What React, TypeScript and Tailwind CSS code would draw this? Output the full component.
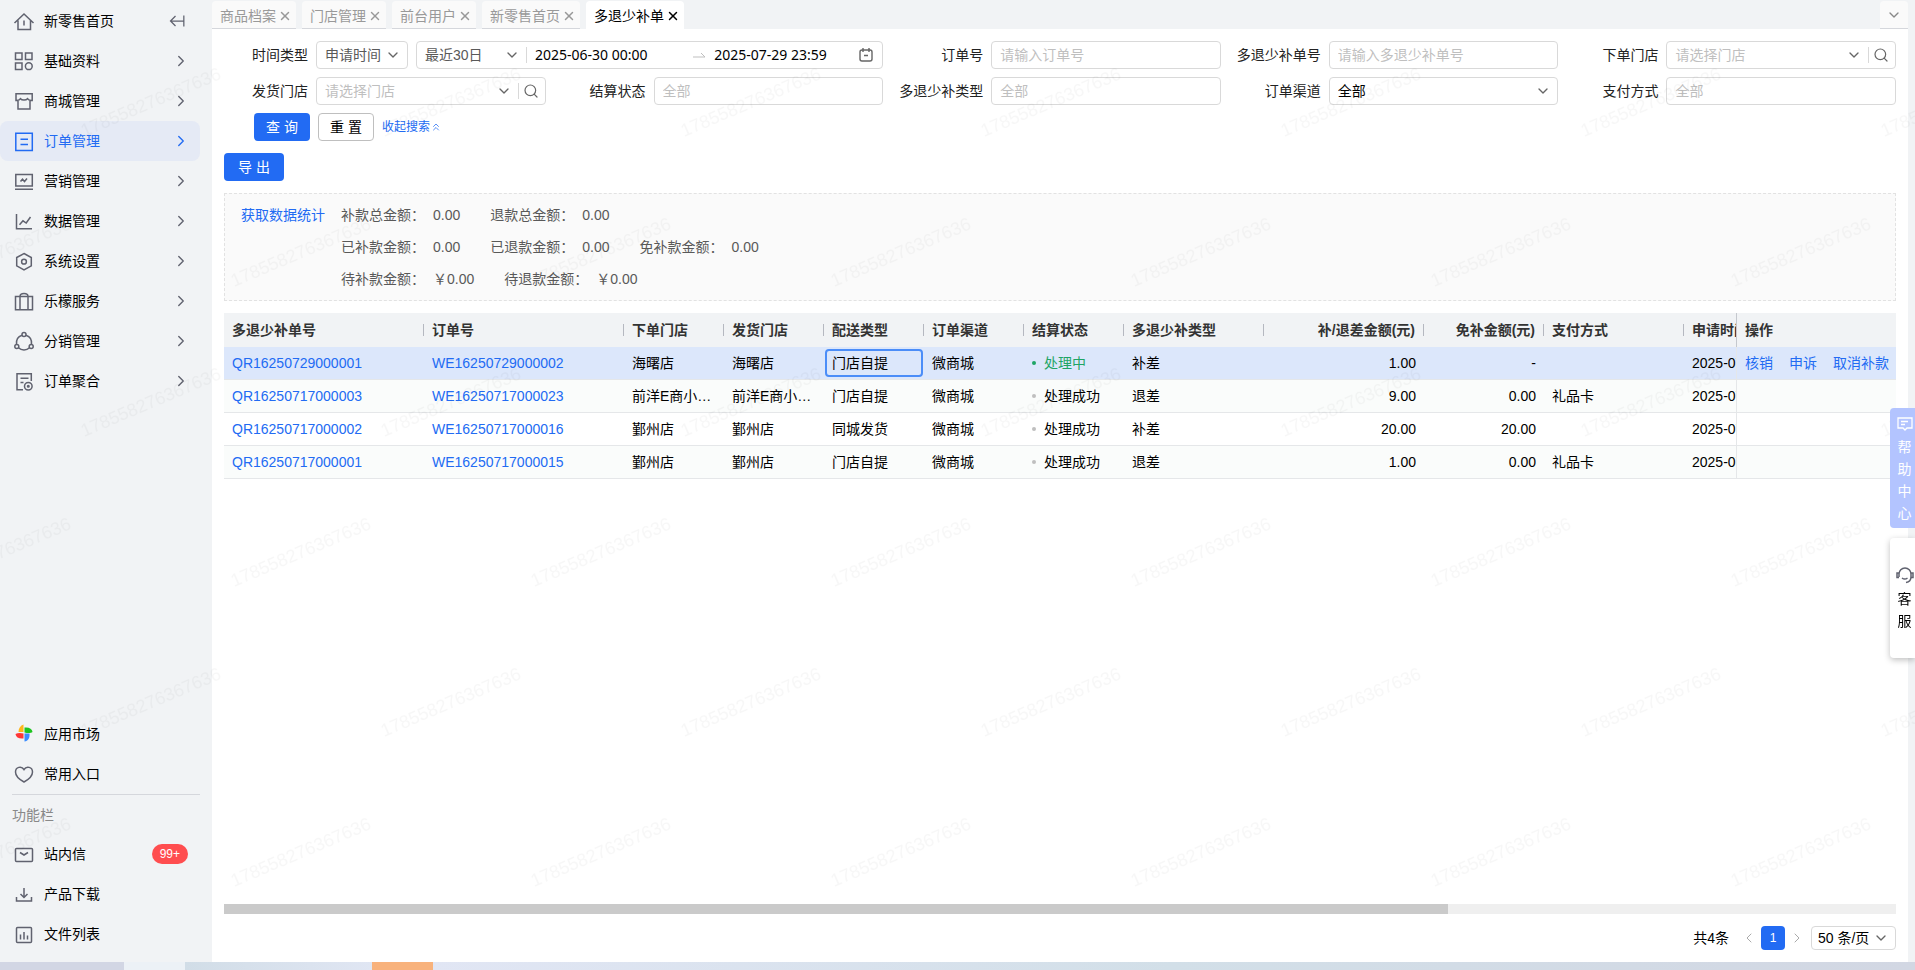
import type { ReactNode } from "react";
import { ChevronDown, ChevronLeft, ChevronRight, ChevronsUp, Search, X } from "lucide-react";

const Icon = ({ children, className = "size-6 text-[#60626f]" }: { children: ReactNode; className?: string }) => (
  <svg
    viewBox="0 0 24 24"
    fill="none"
    stroke="currentColor"
    strokeWidth="1.5"
    className={`shrink-0 ${className}`}
    aria-hidden="true"
  >
    {children}
  </svg>
);

const icons = {
  home: (
    <Icon>
      <path d="M2.5 14 12 5l9.500 9M6 11.500V20.500h12.500V11.500M12 11.500v5" />
    </Icon>
  ),
  basic: (
    <Icon>
      <path d="M3.500 4h6.500v6.500H3.500zM13.500 4H20v6.500h-6.500zM3.500 14h6.500v6.500H3.500z" />
      <circle cx="16.800" cy="17.200" r="3.400" />
    </Icon>
  ),
  mall: (
    <Icon>
      <path d="M4 4.800h16.200v6.700h-2.200V20H6v-8.500H4zM4 11.500c2 0 3.500-.5 4.500-1.800 1.500 1.800 5.500 1.800 7 0 1 1.300 2.500 1.800 4.500 1.800" />
    </Icon>
  ),
  order: (
    <Icon className="size-6 text-[#226bf3]">
      <path d="M3.800 4.200h16.500v17.300H3.800zM8.500 10.200h7.500M8.500 15.500h7.500" />
    </Icon>
  ),
  marketing: (
    <Icon>
      <path d="M3.800 5.500h16.500v11.500H3.800zM3 20.200h18M8.500 12.500l2-2.300 2 2.300 2.500-3" />
    </Icon>
  ),
  data: (
    <Icon>
      <path d="M4.500 5v14.800H20M7.500 15.800l3.500-4 3.200 2.200 4.300-6" />
    </Icon>
  ),
  settings: (
    <Icon>
      <path d="m12 4.500 7.300 4v8.300L12 21l-7.300-4.200V8.500z" />
      <circle cx="12" cy="12.700" r="2.400" />
    </Icon>
  ),
  service: (
    <Icon>
      <path d="M3.500 7.500h17v13.300h-17zM8 20.800V7.500c0-4 8-4 8 0v13.300" />
    </Icon>
  ),
  share: (
    <Icon>
      <circle cx="12" cy="5.500" r="2" />
      <circle cx="4.800" cy="17.500" r="2" />
      <circle cx="19.200" cy="17.500" r="2" />
      <path d="M10 6.200c-4 1.300-6 5-5.500 9.300M14 6.200c4 1.300 6 5 5.500 9.300M6.500 18.800c3 3 8 3 11 0" />
    </Icon>
  ),
  gather: (
    <Icon>
      <path d="M19.300 12V4.800H5v16h6M8.500 9.200h8M8.500 13.500h3" />
      <circle cx="16.300" cy="17.200" r="3.800" />
      <circle cx="16.300" cy="17.200" r=".8" />
    </Icon>
  ),
  heart: (
    <Icon>
      <path d="M12 20C6.500 17 3.500 13.500 3.500 10c0-5 6-6.500 8.500-2.500 2.500-4 8.500-2.500 8.500 2.500 0 3.500-3 7-8.500 10z" />
    </Icon>
  ),
  mail: (
    <Icon>
      <rect x="3.500" y="6.500" width="17" height="13" rx="1" />
      <path d="m8 10.500 4 2.500 4-2.500" />
    </Icon>
  ),
  download: (
    <Icon>
      <path d="M12 6v9M8.500 12l3.500 3.500 3.500-3.500M4.500 15v4h15v-4" />
    </Icon>
  ),
  files: (
    <Icon>
      <rect x="4.500" y="5.500" width="15" height="15" rx="1" />
      <path d="M8.500 17.500v-5M12 17.500V10M15.500 17.500v-4" />
    </Icon>
  ),
  market: (
    <svg viewBox="0 0 24 24" className="size-6 shrink-0" aria-hidden="true">
      <path d="M6.500 10C6.500 6 8.500 3.500 11.500 2.500V10z" fill="#ffb61a" />
      <path d="M12.500 5.500c4.500-.5 7.500 1 8 4.500-1.500 1-4 1.500-8 .5z" fill="#1dc41f" />
      <path d="M17.500 11.500c.5 4.500-1.500 7.500-5 8V11.500z" fill="#3b8cff" />
      <path d="M11.500 16.500c-4.500.5-7.500-1-8-4.500 2-1 4.500-1.500 8-.5z" fill="#ff3636" />
    </svg>
  ),
};

type IconName = keyof typeof icons;

const menu: { icon: IconName; label: string; active?: boolean }[] = [
  { icon: "basic", label: "基础资料" },
  { icon: "mall", label: "商城管理" },
  { icon: "order", label: "订单管理", active: true },
  { icon: "marketing", label: "营销管理" },
  { icon: "data", label: "数据管理" },
  { icon: "settings", label: "系统设置" },
  { icon: "service", label: "乐檬服务" },
  { icon: "share", label: "分销管理" },
  { icon: "gather", label: "订单聚合" },
];

const tabs = ["商品档案", "门店管理", "前台用户", "新零售首页", "多退少补单"];

const stats = [
  [
    ["补款总金额：", "0.00"],
    ["退款总金额：", "0.00"],
  ],
  [
    ["已补款金额：", "0.00"],
    ["已退款金额：", "0.00"],
    ["免补款金额：", "0.00"],
  ],
  [
    ["待补款金额：", "￥0.00"],
    ["待退款金额：", "￥0.00"],
  ],
];

const columns: { title: string; col: string; right?: boolean }[] = [
  { title: "多退少补单号", col: "w-[200px]" },
  { title: "订单号", col: "w-[200px]" },
  { title: "下单门店", col: "w-[100px]" },
  { title: "发货门店", col: "w-[100px]" },
  { title: "配送类型", col: "w-[100px]" },
  { title: "订单渠道", col: "w-[100px]" },
  { title: "结算状态", col: "w-[100px]" },
  { title: "多退少补类型", col: "w-[140px]" },
  { title: "补/退差金额(元)", col: "w-[160px]", right: true },
  { title: "免补金额(元)", col: "w-[120px]", right: true },
  { title: "支付方式", col: "w-[140px]" },
  { title: "申请时间", col: "w-[664px]" },
];

const rows = [
  { no: "QR16250729000001", order: "WE16250729000002", store: "海曙店", delivery: "门店自提", status: "处理中", type: "补差", amount: "1.00", free: "-", pay: "", time: "2025-07" },
  { no: "QR16250717000003", order: "WE16250717000023", store: "前洋E商小镇店", delivery: "门店自提", status: "处理成功", type: "退差", amount: "9.00", free: "0.00", pay: "礼品卡", time: "2025-07" },
  { no: "QR16250717000002", order: "WE16250717000016", store: "鄞州店", delivery: "同城发货", status: "处理成功", type: "补差", amount: "20.00", free: "20.00", pay: "", time: "2025-07" },
  { no: "QR16250717000001", order: "WE16250717000015", store: "鄞州店", delivery: "门店自提", status: "处理成功", type: "退差", amount: "1.00", free: "0.00", pay: "礼品卡", time: "2025-07" },
];

const box = "h-7 rounded border border-[#d9d9d9] bg-white";

const Field = ({ id, label, className = "", children }: { id: string; label: string; className?: string; children: ReactNode }) => (
  <div className={`flex items-center gap-2 ${className}`}>
    <label htmlFor={id} className="w-21 shrink-0 text-right whitespace-nowrap">
      {label}
    </label>
    {children}
  </div>
);

const TextField = ({ id, label, placeholder }: { id: string; label: string; placeholder: string }) => (
  <Field id={id} label={label}>
    <input id={id} placeholder={placeholder} className={`${box} w-full min-w-0 px-2 placeholder:text-[#bfbfbf]`} />
  </Field>
);

const Select = ({ id, label, options, className = "" }: { id: string; label?: string; options: string[]; className?: string }) => (
  <div className={`relative flex items-center ${className}`}>
    <select id={id} aria-label={label} className="h-full w-full appearance-none bg-transparent pr-6 pl-2 outline-none">
      {options.map((o) => (
        <option key={o}>{o}</option>
      ))}
    </select>
    <ChevronDown className="pointer-events-none absolute right-1.5 size-4 text-[#666]" />
  </div>
);

const StoreField = ({ id, label }: { id: string; label: string }) => (
  <Field id={id} label={label}>
    <div className={`${box} flex w-full min-w-0 items-center`}>
      <Select id={id} options={["请选择门店"]} className="h-full flex-1 text-[#bfbfbf]" />
      <span className="h-4 w-px bg-[#d9d9d9]" />
      <button type="button" aria-label="搜索门店" className="pr-1.5 pl-1">
        <Search className="size-4" color="#666" strokeWidth={1.8} />
      </button>
    </div>
  </Field>
);

const Sidebar = () => (
  <aside className="flex w-53 shrink-0 flex-col justify-between pt-px pb-2 text-black">
    <nav className="w-50">
      <div className="flex h-10 items-center gap-2 pr-3 pl-3">
        {icons.home}
        <a href="#home">新零售首页</a>
        <button type="button" aria-label="收起菜单" className="ml-auto">
          <Icon className="size-5 text-[#60626f]">
            <path d="M19 5.500v13M19 12H3M9 6l-6 6 6 6" />
          </Icon>
        </button>
      </div>
      {menu.map((m) => (
        <a
          key={m.label}
          href="#menu"
          className={`flex h-10 items-center gap-2 rounded-lg pr-2.5 pl-3 ${m.active ? "bg-[#e5eaf5] text-[#226bf3]" : ""}`}
        >
          {icons[m.icon]}
          {m.label}
          <ChevronRight className={`ml-auto size-4.5 ${m.active ? "" : "text-[#60626f]"}`} strokeWidth={1.8} />
        </a>
      ))}
    </nav>
    <nav className="w-50">
      <a href="#market" className="flex h-10 items-center gap-2 pl-3">
        {icons.market}应用市场
      </a>
      <a href="#favorite" className="flex h-10 items-center gap-2 pl-3">
        {icons.heart}常用入口
      </a>
      <h2 className="ml-3 flex h-10 items-center border-t border-[#d5d7dc] text-[#888]">功能栏</h2>
      <a href="#mail" className="flex h-10 items-center gap-2 pr-3 pl-3">
        {icons.mail}站内信
        <span className="ml-auto rounded-full bg-[#ff4d4f] px-2 text-xs leading-5 text-white">99+</span>
      </a>
      <a href="#download" className="flex h-10 items-center gap-2 pl-3">
        {icons.download}产品下载
      </a>
      <a href="#files" className="flex h-10 items-center gap-2 pl-3">
        {icons.files}文件列表
      </a>
    </nav>
  </aside>
);

const TabBar = () => (
  <div className="flex h-[29px] gap-1.5 bg-[#f1f3f5] pt-px">
    {tabs.map((tab) => {
      const active = tab === "多退少补单";
      return (
        <div
          key={tab}
          className={`flex items-center gap-0.5 rounded-t pt-0.5 pr-1 pl-2 ${
            active ? "bg-white text-black" : "border-b border-[#d5d7dc] bg-[#fafafa] text-[#999]"
          }`}
        >
          <a href="#tab">{tab}</a>
          <button type="button" aria-label={`关闭${tab}`}>
            <X className="size-3.5" strokeWidth={2.5} />
          </button>
        </div>
      );
    })}
    <button
      type="button"
      aria-label="更多标签"
      className="ml-auto flex w-7 items-center justify-center rounded-t border-b border-[#d5d7dc] bg-[#fafafa]"
    >
      <ChevronDown className="size-4 text-[#888]" />
    </button>
  </div>
);

const Filters = () => (
  <form className="mt-3">
    <div className="grid grid-cols-5 gap-x-4 gap-y-2">
      <Field id="timeType" label="时间类型" className="col-span-2">
        <Select id="timeType" options={["申请时间"]} className={`${box} w-23 shrink-0 text-[#595959]`} />
        <div className={`${box} flex min-w-0 flex-1 items-center`}>
          <Select id="range" label="时间范围" options={["最近30日"]} className="h-full w-[109px] shrink-0 text-[#595959]" />
          <span className="h-4 w-px shrink-0 bg-[#d9d9d9]" />
          <input
            aria-label="开始时间"
            defaultValue="2025-06-30 00:00"
            className="w-0 flex-1 px-2 font-['Noto_Sans'] text-black outline-none"
          />
          <svg viewBox="0 0 14 6" className="w-3.5 shrink-0" fill="none" stroke="#bfbfbf" aria-hidden="true">
            <path d="M1 5h12L9 1" />
          </svg>
          <input
            aria-label="结束时间"
            defaultValue="2025-07-29 23:59"
            className="w-36 shrink-0 px-2 font-['Noto_Sans'] text-black outline-none"
          />
          <button type="button" aria-label="选择日期" className="px-2">
            <svg viewBox="0 0 16 16" className="size-4" fill="none" stroke="#666" strokeWidth="1.400" aria-hidden="true">
              <rect x="2" y="3" width="12" height="11" rx="2" />
              <path d="M5 1v4M11 1v4M6 8.500h4" />
            </svg>
          </button>
        </div>
      </Field>
      <TextField id="orderNo" label="订单号" placeholder="请输入订单号" />
      <TextField id="billNo" label="多退少补单号" placeholder="请输入多退少补单号" />
      <StoreField id="orderStore" label="下单门店" />
      <StoreField id="sendStore" label="发货门店" />
      <TextField id="status" label="结算状态" placeholder="全部" />
      <TextField id="type" label="多退少补类型" placeholder="全部" />
      <Field id="channel" label="订单渠道">
        <Select id="channel" options={["全部"]} className={`${box} w-full min-w-0 text-black`} />
      </Field>
      <TextField id="pay" label="支付方式" placeholder="全部" />
    </div>
    <div className="mt-2 ml-7.5 flex items-center gap-2">
      <button type="submit" className="h-7 w-14 rounded-sm bg-[#226bf3] text-white">
        查 询
      </button>
      <button type="reset" className="h-7 w-14 rounded border border-[#bfbfbf] bg-white text-black">
        重 置
      </button>
      <button type="button" className="flex items-center text-xs text-[#226bf3]">
        收起搜索
        <ChevronsUp className="size-3" strokeWidth={1.5} />
      </button>
    </div>
  </form>
);

const Stats = () => (
  <section className="mt-3 flex gap-4 border border-dashed border-[#e2e2e2] bg-[#fafafa] px-4 py-[5px] text-[#595959]">
    <button type="button" className="h-8 self-start text-[#226bf3]">
      获取数据统计
    </button>
    <div>
      {stats.map((line) => (
        <dl key={line[0][0]} className="flex h-8 items-center">
          {line.map(([name, value]) => (
            <div key={name} className="mr-7.5 flex gap-2">
              <dt>{name}</dt>
              <dd>{value}</dd>
            </div>
          ))}
        </dl>
      ))}
    </div>
  </section>
);

const Table = () => (
  <div className="mt-3 min-h-0 flex-1 overflow-hidden">
    <table className="w-[2284px] table-fixed border-separate border-spacing-0 text-left text-black">
      <thead>
        <tr className="h-[34px] text-[#333]">
          {columns.map((c) => (
            <th key={c.title} className={`${c.col} bg-[#f1f3f5] p-0 font-bold`}>
              <div className={`h-3 border-r border-[#b5b8c0] px-2 leading-3 whitespace-nowrap ${c.right ? "text-right" : ""}`}>
                {c.title}
              </div>
            </th>
          ))}
          <th className="sticky right-0 w-40 border-l border-[#c5c8ce] bg-[#f1f3f5] px-2 py-0 font-bold">操作</th>
        </tr>
      </thead>
      <tbody>
        {rows.map((r, i) => {
          const bg = i === 0 ? "bg-[#dce7fb]" : i % 2 ? "bg-[#fafcfb]" : "bg-white";
          const cell = `h-[33px] border-b border-[#e5e7e9] px-2 py-0 truncate ${bg}`;
          return (
            <tr key={r.no}>
              <td className={cell}>
                <a href="#bill" className="text-[#226bf3]">
                  {r.no}
                </a>
              </td>
              <td className={cell}>
                <a href="#order" className="text-[#226bf3]">
                  {r.order}
                </a>
              </td>
              <td className={cell}>{r.store}</td>
              <td className={cell}>{r.store}</td>
              <td className={`${cell} relative`}>
                {i === 0 && <span className="absolute inset-x-px inset-y-0.5 rounded-sm border-2 border-[#4b8df8]" />}
                {r.delivery}
              </td>
              <td className={cell}>微商城</td>
              <td className={cell}>
                <span className={`flex items-center gap-2 ${i === 0 ? "text-[#1fa565]" : ""}`}>
                  <i className={`size-1 rounded-full ${i === 0 ? "bg-[#1fa565]" : "bg-[#bfbfbf]"}`} />
                  {r.status}
                </span>
              </td>
              <td className={cell}>{r.type}</td>
              <td className={`${cell} text-right`}>{r.amount}</td>
              <td className={`${cell} text-right`}>{r.free}</td>
              <td className={cell}>{r.pay}</td>
              <td className={cell}>{r.time}</td>
              <td className={`${cell} sticky right-0 border-l`}>
                {i === 0 && (
                  <div className="flex gap-4 text-[#226bf3]">
                    <button type="button">核销</button>
                    <button type="button">申诉</button>
                    <button type="button">取消补款</button>
                  </div>
                )}
              </td>
            </tr>
          );
        })}
      </tbody>
    </table>
  </div>
);

const Pager = () => (
  <div className="my-3 flex h-6 items-center justify-end text-black">
    <span className="mr-3">共4条</span>
    <button type="button" aria-label="上一页" className="flex w-5 justify-start">
      <ChevronLeft className="size-4" color="#aaa" strokeWidth={1.5} />
    </button>
    <button type="button" className="size-6 rounded bg-[#226bf3] text-xs text-white">
      1
    </button>
    <button type="button" aria-label="下一页" className="mr-1.5 flex w-5 justify-end">
      <ChevronRight className="size-4" color="#aaa" strokeWidth={1.5} />
    </button>
    <Select
      id="pageSize"
      label="每页条数"
      options={["50 条/页"]}
      className="h-6 w-[85px] rounded border border-[#d9d9d9] *:[select]:pl-1.5"
    />
  </div>
);

const Watermark = () => (
  <svg className="pointer-events-none absolute inset-0 size-full" aria-hidden="true">
    <defs>
      <pattern id="mark" width="300" height="300" patternUnits="userSpaceOnUse">
        <g fill="#000" fillOpacity="0.03" fontSize="18" fontFamily="Liberation Sans">
          <text transform="translate(234 287) rotate(-23)">178558276367636</text>
          <text transform="translate(-66 287) rotate(-23)">178558276367636</text>
          <text transform="translate(84 137) rotate(-23)">178558276367636</text>
        </g>
      </pattern>
    </defs>
    <rect width="100%" height="100%" fill="url(#mark)" />
  </svg>
);

const App = () => (
  <div className="relative flex h-screen flex-col overflow-hidden bg-[#f1f3f5] font-['Liberation_Sans','Noto_Sans_CJK_SC',sans-serif] text-sm text-[#222]">
    <div className="relative flex min-h-0 flex-1">
      <Sidebar />
      <main className="mr-[7px] flex min-w-0 flex-1 flex-col bg-white">
        <TabBar />
        <div className="flex min-h-0 flex-1 flex-col px-3">
          <Filters />
          <div className="mt-3">
            <button type="button" className="block h-7 w-15 rounded-sm bg-[#226bf3] text-white">
              导 出
            </button>
          </div>
          <Stats />
          <Table />
          <div className="h-2.5 bg-[#efefef]">
            <div className="h-full w-[73.2%] bg-[#cacaca]" />
          </div>
          <Pager />
        </div>
      </main>
      <Watermark />
    </div>
    <div className="flex h-2 shrink-0">
      <div className="w-31 bg-[#d2d6e4]" />
      <div className="w-[61px] bg-[#ecf1f6]" />
      <div className="w-[187px] bg-linear-to-r from-[#d1dde7] to-[#e0e6f3]" />
      <div className="w-[61px] bg-[#f8b27c]" />
      <div className="flex-1 bg-linear-to-r from-[#e1e6f4] via-[#d2dfe8] to-[#d2d7e3]" />
    </div>

    <button
      type="button"
      className="absolute top-[408px] right-0 flex h-30 w-[25px] flex-col items-center rounded-l bg-[#b3c4ff] pt-1 pl-1 leading-[22px] text-white"
    >
      <svg viewBox="0 0 16 16" className="my-1 size-4 shrink-0" fill="none" stroke="currentColor" strokeWidth="1.300" aria-hidden="true">
        <path d="M1 2h14v10h-5l-2 2-2-2H1zM4 5.500h7M4 8.500h4" />
      </svg>
      <span className="w-3.5">帮助中心</span>
    </button>
    <button
      type="button"
      className="absolute top-[538px] right-0 flex h-30 w-[25px] flex-col items-center rounded-l bg-white pt-7 pl-1 leading-[22px] text-black shadow-[0_2px_6px_rgba(0,0,0,0.25)]"
    >
      <svg viewBox="0 0 18 18" className="mb-1 size-4.5 shrink-0" fill="none" stroke="#60626f" strokeWidth="1.500" aria-hidden="true">
        <path d="M3 11V8a6 6 0 0 1 12 0v3c0 3-2 5-5 5.500M3 7H1v4.500h2M15 7h2v4.500h-2M6 12c1.500 1.200 4 1.200 5.500 0" />
      </svg>
      <span className="w-3.5">客服</span>
    </button>
  </div>
);

export default App;
